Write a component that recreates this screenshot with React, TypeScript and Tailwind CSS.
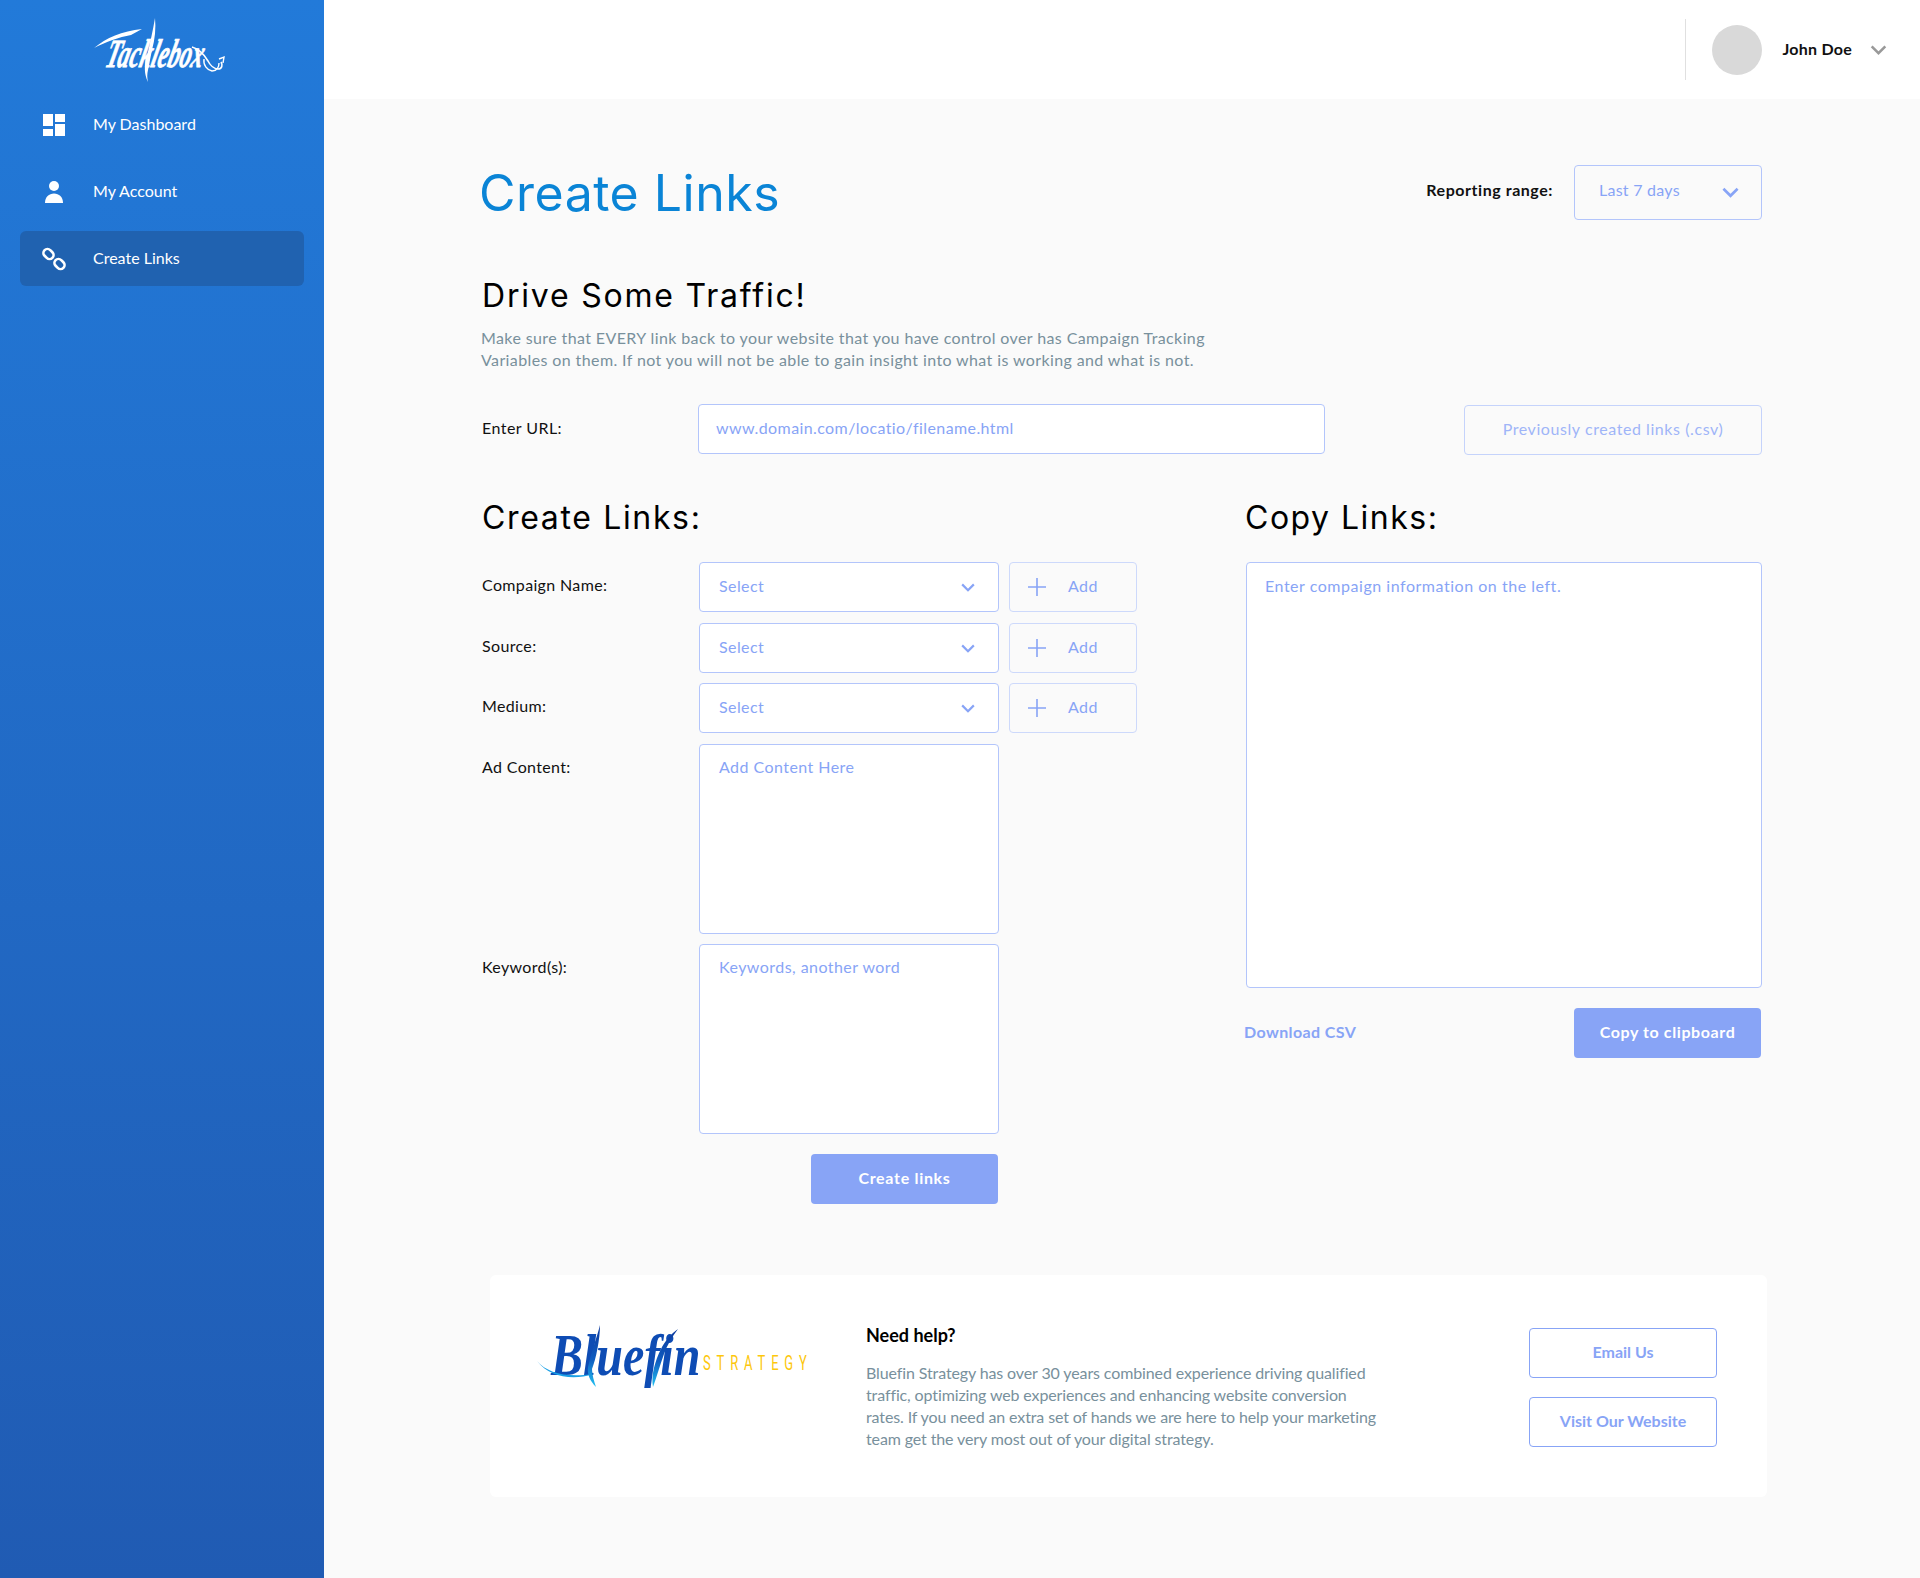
const lato = { fontFamily: 'Lato, "Open Sans", sans-serif' };

function Chevron({ className }: { className: string }) {
  return (
    <svg className={className} viewBox="0 0 18 11" fill="none" stroke="currentColor" strokeWidth={2.8}>
      <path d="M1.5 1.5 9 9l7.5-7.5" />
    </svg>
  );
}

function TackleboxLogo() {
  return (
    <svg width="140" height="66" viewBox="0 0 140 66" aria-label="Tacklebox">
      <text transform="translate(12 50) skewX(-14) scale(0.58 1)" fill="#fff" stroke="#fff" strokeWidth="0.8" fontFamily="Liberation Serif, serif" fontStyle="italic" fontWeight="700" fontSize="40">
        Tacklebox
      </text>
      <path d="M2 31C14 21 30 14 50 12l-11 6C27 20 14 25 2 31Z" fill="#fff" />
      <path d="M63 1c1 10 0 21-3 32l-4 20c-1 4-1 8 0 12-4-8-4-17-1-26C58 26 61 13 63 1Z" fill="#fff" />
      <path d="M100 30c7 2 12 7 16 14 2 4 6 8 10 8s5-4 3-7" fill="none" stroke="#fff" strokeWidth="1.6" />
      <path d="M112 42c-1 6 3 11 8 12 5 0 7-4 7-8" fill="none" stroke="#fff" strokeWidth="1.4" />
      <path d="M127 42l5-2-1 6" fill="none" stroke="#fff" strokeWidth="1.4" />
    </svg>
  );
}

function BluefinLogo() {
  return (
    <svg width="276" height="70" viewBox="0 0 276 70" aria-label="Bluefin Strategy">
      <defs>
        <linearGradient id="bluefinFill" x1="0" y1="0" x2="0" y2="1">
          <stop offset="0%" stopColor="#0d3a9e" />
          <stop offset="55%" stopColor="#0f5cc0" />
          <stop offset="100%" stopColor="#22c2f2" />
        </linearGradient>
      </defs>
      <text transform="translate(14 52) scale(0.8 1)" fill="#0e4cb4" fontFamily="Liberation Serif, serif" fontStyle="italic" fontWeight="700" fontSize="60">
        Bluefin
      </text>
      <path d="M0 38c10 12 30 17 56 13-20 7-44 3-56-13Z" fill="#1aa0e6" />
      <path d="M63 2c0 14-4 34-8 44 0 6 2 12 4 18-6-6-9-13-8-20C54 30 60 14 63 2Z" fill="url(#bluefinFill)" />
      <path d="M116 64c-2-12 2-26 8-38 4-8 10-15 17-20-6 8-11 16-14 25-4 11-7 22-11 33Z" fill="url(#bluefinFill)" />
      <text transform="translate(166 47) scale(0.65 1)" fill="#fdc70c" fontFamily="Roboto, sans-serif" fontSize="20" letterSpacing="9">
        STRATEGY
      </text>
    </svg>
  );
}

function NavItem({ label, active, children }: { label: string; active?: boolean; children: React.ReactNode }) {
  return (
    <div className={`flex h-[55px] items-center rounded-md pl-[23px] text-white ${active ? 'bg-[#2062b0]' : ''}`}>
      <div className="flex w-[50px] items-center">{children}</div>
      <span className="-translate-y-px text-base">{label}</span>
    </div>
  );
}

function SelectRow({ label, className = '' }: { label: string; className?: string }) {
  return (
    <div className={`flex items-center ${className}`}>
      <span className="w-[217px] -translate-y-[2px] text-base tracking-[0.35px] text-[#111]">{label}</span>
      <div className="flex h-[50px] w-[300px] items-center justify-between rounded border border-[#b3c5fb] bg-white pl-[19px] pr-[23px] text-base tracking-[0.4px] text-[#88a4f6]">
        <span className="-translate-y-px">Select</span>
        <Chevron className="h-[9px] w-[14px]" />
      </div>
      <div className="ml-[10px] flex h-[50px] w-[128px] items-center rounded border border-[#cdd9fb] pl-[18px] text-base tracking-[0.4px] text-[#88a4f6]">
        <svg className="h-[18px] w-[18px]" viewBox="0 0 18 18" stroke="currentColor" strokeWidth={1.6}>
          <path d="M9 0v18M0 9h18" />
        </svg>
        <span className="ml-[22px] -translate-y-px">Add</span>
      </div>
    </div>
  );
}

function TextBlock({ label, placeholder }: { label: string; placeholder: string }) {
  return (
    <div className="flex items-start">
      <span className="w-[217px] pt-[11px] text-base tracking-[0.35px] text-[#111]">{label}</span>
      <div className="h-[190px] w-[300px] rounded border border-[#b3c5fb] bg-white px-[19px] pt-[10px] text-base tracking-[0.45px] text-[#88a4f6]">
        {placeholder}
      </div>
    </div>
  );
}

export default function App() {
  return (
    <div className="flex min-h-[1578px] bg-[#fafafa]" style={lato}>
      <aside className="w-[324px] shrink-0 bg-gradient-to-b from-[#227ad9] to-[#205bb3] px-[20px]">
        <div className="flex h-[97px] justify-center pt-[17px]">
          <TackleboxLogo />
        </div>
        <NavItem label="My Dashboard">
          <svg width="22" height="22" viewBox="0 0 22 22" fill="#fff">
            <path d="M0 0h10v12H0zM0 15h10v7H0zM12 0h10v8H12zM12 10h10v12H12z" />
          </svg>
        </NavItem>
        <div className="mt-[12px]">
          <NavItem label="My Account">
            <svg width="22" height="22" viewBox="0 0 22 22" fill="#fff">
              <circle cx="11" cy="5" r="5" />
              <path d="M2 22c0-6 4-9.500 9-9.500s9 3.500 9 9.500Z" />
            </svg>
          </NavItem>
        </div>
        <div className="mt-[12px]">
          <NavItem label="Create Links" active>
            <svg width="24" height="24" viewBox="0 0 24 24" fill="none" stroke="#fff" strokeWidth={2.6} className="-translate-x-px">
              <rect x="1" y="3" width="11" height="8" rx="4" transform="rotate(45 6.500 7)" />
              <rect x="12" y="13" width="11" height="8" rx="4" transform="rotate(45 17.500 17)" />
            </svg>
          </NavItem>
        </div>
      </aside>

      <div className="flex min-w-0 flex-1 flex-col">
        <header className="flex h-[99px] items-center justify-end bg-white pr-[33px]">
          <div className="mr-[26px] h-[61px] w-px bg-[#e0e0e0]" />
          <div className="h-[50px] w-[50px] rounded-full bg-[#d9d9d9]" />
          <span className="ml-[20px] -translate-y-px text-base font-bold tracking-[0.25px] text-[#111]">John Doe</span>
          <Chevron className="ml-[18px] h-[10px] w-[17px] text-[#999]" />
        </header>

        <main className="pl-[156px]">
          <div className="w-[1282px] pt-[65px]">
            <div className="flex items-center justify-between">
              <h1 className="-ml-px translate-y-px font-['Inter'] text-[50px] leading-[56px] font-normal tracking-[0.5px] text-[#0a84d6]">Create Links</h1>
              <div className="flex items-center">
                <span className="-translate-y-[2px] text-base font-bold tracking-[0.55px] text-[#111]">Reporting range:</span>
                <div className="ml-[21px] flex h-[55px] w-[188px] items-center justify-between rounded border border-[#b3c5fb] pl-[24px] pr-[22px] text-base tracking-[0.25px] text-[#88a4f6]">
                  <span className="-translate-y-[2px]">Last 7 days</span>
                  <Chevron className="h-[11px] w-[17px]" />
                </div>
              </div>
            </div>

            <div className="pl-[2px]">
              <h2 className="mt-[56px] font-['Inter'] text-[32px] leading-[40px] font-normal tracking-[1.8px] text-black">Drive Some Traffic!</h2>
              <p className="mt-[11px] -ml-[1px] w-[760px] text-base leading-[22px] tracking-[0.39px] text-[#78909c]">
                Make sure that EVERY link back to your website that you have control over has Campaign Tracking
                <br />
                Variables on them. If not you will not be able to gain insight into what is working and what is not.
              </p>

              <div className="mt-[33px] flex items-center">
                <span className="w-[216px] -translate-y-px text-base tracking-[0.45px] text-[#111]">Enter URL:</span>
                <div className="flex h-[50px] w-[627px] items-center rounded border border-[#b3c5fb] bg-white pl-[17px] text-base tracking-[0.4px] text-[#88a4f6]">
                  <span className="-translate-y-px">www.domain.com/locatio/filename.html</span>
                </div>
                <div className="ml-[139px] flex h-[50px] w-[298px] translate-y-px items-center justify-center rounded border border-[#c5d3fb] text-base tracking-[0.57px] text-[#9fb5f8]">
                  <span className="-translate-y-px">Previously created links (.csv)</span>
                </div>
              </div>

              <div className="mt-[44px] flex">
                <div className="w-[763px]">
                  <h2 className="font-['Inter'] text-[32px] leading-[40px] font-normal tracking-[1.65px] text-black">Create Links:</h2>
                  <div className="mt-[24px] flex flex-col gap-[10px]">
                    <SelectRow label="Compaign Name:" />
                    <SelectRow label="Source:" className="mt-px" />
                    <SelectRow label="Medium:" />
                    <div className="mt-px">
                      <TextBlock label="Ad Content:" placeholder="Add Content Here" />
                    </div>
                    <TextBlock label="Keyword(s):" placeholder="Keywords, another word" />
                  </div>
                  <div className="mt-[20px] ml-[329px] flex h-[50px] w-[187px] items-center justify-center rounded bg-[#88a4f6] text-base font-bold tracking-[0.7px] text-white">
                    <span className="-translate-y-px">Create links</span>
                  </div>
                </div>

                <div className="w-[517px]">
                  <h2 className="font-['Inter'] text-[32px] leading-[40px] font-normal tracking-[1.5px] text-black">Copy Links:</h2>
                  <div className="mt-[24px] ml-px h-[426px] w-[516px] rounded border border-[#b3c5fb] bg-white px-[18px] pt-[11px] text-base tracking-[0.53px] text-[#88a4f6]">
                    Enter compaign information on the left.
                  </div>
                  <div className="mt-[20px] mr-px flex items-center justify-between">
                    <span className="-ml-px -translate-y-px text-base font-bold tracking-[0.4px] text-[#88a4f6]">Download CSV</span>
                    <div className="flex h-[50px] w-[187px] items-center justify-center rounded bg-[#88a4f6] text-base font-bold tracking-[0.6px] text-white">
                      <span className="-translate-y-px">Copy to clipboard</span>
                    </div>
                  </div>
                </div>
              </div>
            </div>

            <section className="mt-[71px] ml-[10px] flex h-[222px] w-[1277px] items-start rounded-md bg-white">
              <div className="mt-[48px] ml-[47px] w-[329px]">
                <BluefinLogo />
              </div>
              <div className="mt-[48px] w-[560px]">
                <h3 className="text-[18px] leading-[24px] font-bold text-black">Need help?</h3>
                <p className="mt-[15px] text-base leading-[22px] tracking-[-0.12px] text-[#78909c]">
                  Bluefin Strategy has over 30 years combined experience driving qualified
                  <br />
                  traffic, optimizing web experiences and enhancing website conversion
                  <br />
                  rates. If you need an extra set of hands we are here to help your marketing
                  <br />
                  team get the very most out of your digital strategy.
                </p>
              </div>
              <div className="mt-[53px] ml-[103px] flex w-[188px] flex-col gap-[19px]">
                <div className="flex h-[50px] items-center justify-center rounded border border-[#88a4f6] text-base font-bold text-[#88a4f6]">
                  <span className="-translate-y-px">Email Us</span>
                </div>
                <div className="flex h-[50px] items-center justify-center rounded border border-[#88a4f6] text-base font-bold text-[#88a4f6]">
                  <span className="-translate-y-px">Visit Our Website</span>
                </div>
              </div>
            </section>
          </div>
        </main>
      </div>
    </div>
  );
}
